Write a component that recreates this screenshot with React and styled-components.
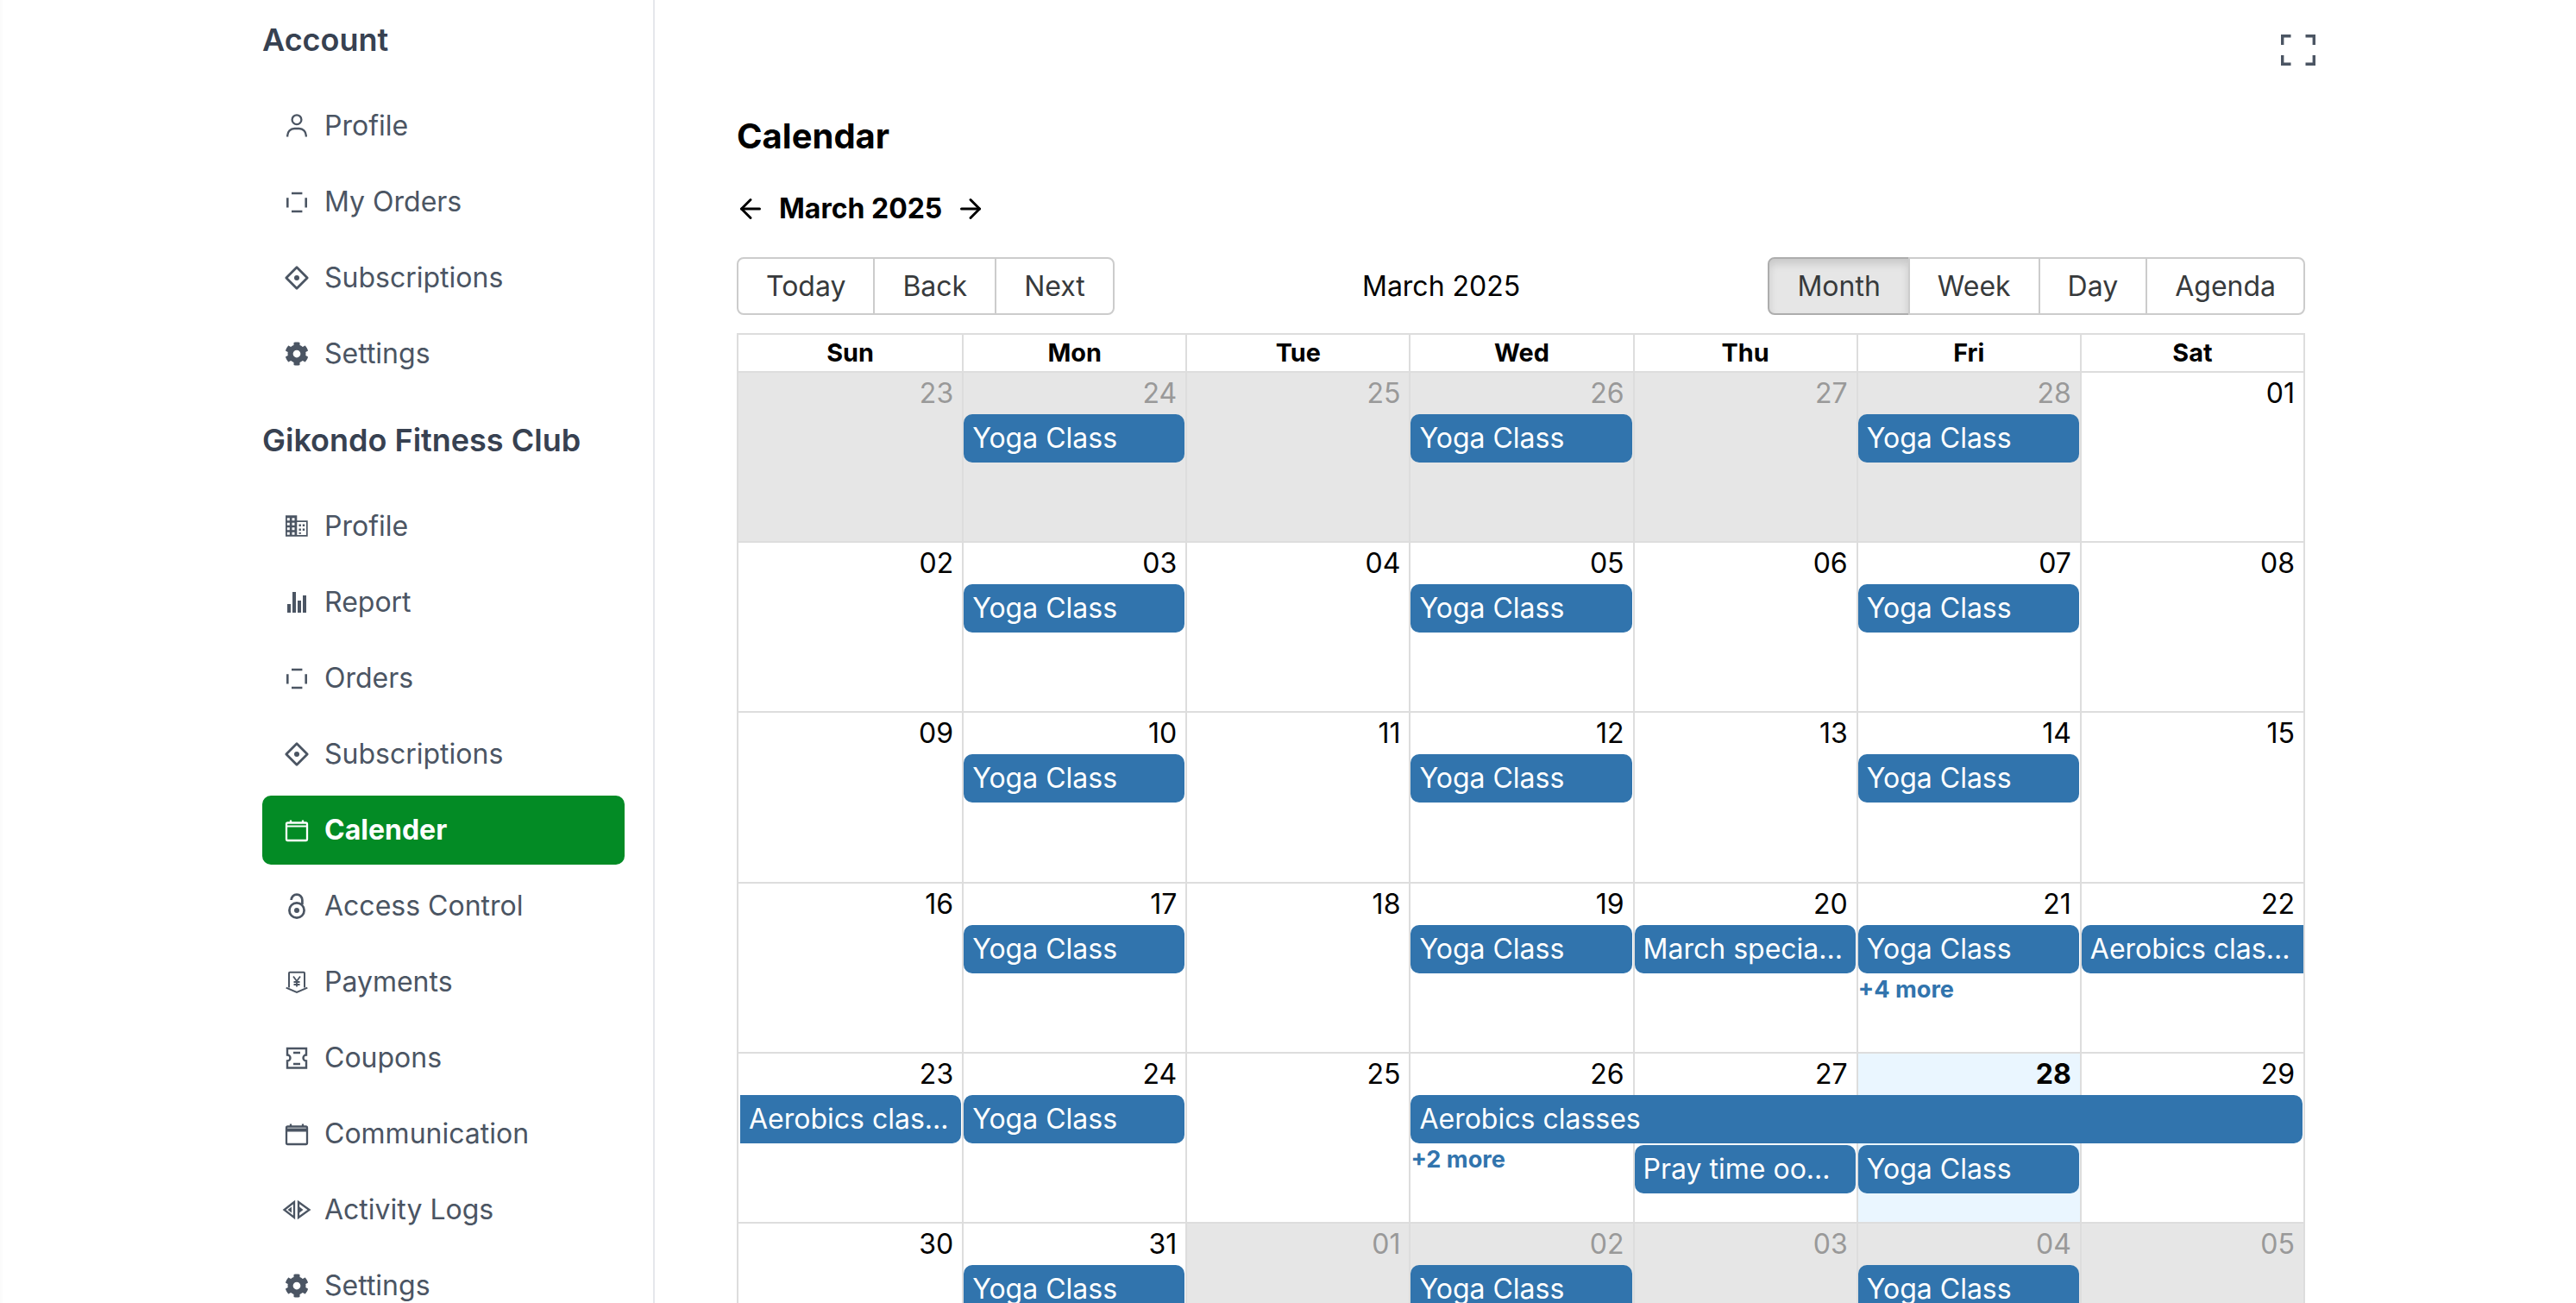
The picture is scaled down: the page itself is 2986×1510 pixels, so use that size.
import styled, { createGlobalStyle } from 'styled-components';
import { ArrowLeft, ArrowRight } from 'lucide-react';
import { FaCog } from 'react-icons/fa';

const GlobalStyle = createGlobalStyle`
  html, body {
    margin: 0;
    height: 100%;
    overflow: hidden;
    background: #fff;
  }
  body {
    font-family: Inter, "Liberation Sans", sans-serif;
    font-size: 32px;
    line-height: 1.5;
    color: #000;
  }
  * { box-sizing: border-box; }
`;

const Page = styled.div`
  display: flex;
  height: 1510px;
  overflow: hidden;
`;

const Sidebar = styled.aside`
  flex: 0 0 759px;
  padding: 18px 33px 0 304px;
  border-right: 2px solid #e5e7eb;
  box-shadow: inset 6px 0 6px -6px rgba(0, 0, 0, 0.04);
`;

const Group = styled.section`
  margin-bottom: 32px;
`;

const GroupTitle = styled.h2`
  margin: 0 0 32px;
  font-size: 36px;
  line-height: 56px;
  font-weight: 600;
  color: #374151;
`;

const NavList = styled.ul`
  list-style: none;
  margin: 0;
  padding: 0;
  display: flex;
  flex-direction: column;
  gap: 8px;
`;

const NavItem = styled.li`
  display: flex;
  align-items: center;
  gap: 18px;
  height: 80px;
  padding-left: 26px;
  border-radius: 10px;
  color: ${(p) => (p.$active ? '#fff' : '#4b5563')};
  background: ${(p) => (p.$active ? '#038b25' : 'transparent')};
  font-weight: ${(p) => (p.$active ? 700 : 400)};

  svg {
    flex: 0 0 28px;
    overflow: visible;
  }
`;

const Main = styled.main`
  flex: 1;
  min-width: 0;
  padding: 40px 314px 0 95px;
`;

const TopBar = styled.div`
  display: flex;
  justify-content: flex-end;
  height: 36px;
  margin-right: -12px;
  color: #4b5563;
`;

const Title = styled.h1`
  margin: 52px 0 0;
  font-size: 40px;
  line-height: 60px;
  font-weight: 700;
`;

const MonthNav = styled.div`
  display: flex;
  align-items: center;
  gap: 15px;
  height: 54px;
  margin: 27px 0 29px -2px;
  font-size: 32px;
  font-weight: 700;
`;

const Toolbar = styled.div`
  display: flex;
  align-items: center;
  margin-bottom: 21px;
`;

const ToolbarLabel = styled.span`
  flex: 1;
  text-align: center;
  padding: 0 20px;
`;

const ButtonGroup = styled.div`
  display: inline-flex;
`;

const ToolButton = styled.button`
  font: inherit;
  line-height: normal;
  color: #373a3c;
  background: ${(p) => (p.$active ? '#e6e6e6' : 'transparent')};
  border: 2px solid ${(p) => (p.$active ? '#adadad' : '#ccc')};
  box-shadow: ${(p) => (p.$active ? 'inset 0 6px 10px rgba(0, 0, 0, 0.125)' : 'none')};
  padding: 12px 32px;
  border-radius: 0;

  &:first-child {
    border-radius: 8px 0 0 8px;
  }
  &:last-child {
    border-radius: 0 8px 8px 0;
  }
  &:not(:first-child) {
    margin-left: -2px;
  }
`;

const Calendar = styled.div`
  border: 2px solid #ddd;
  border-bottom: 0;
`;

const HeaderRow = styled.div`
  display: grid;
  grid-template-columns: repeat(7, 1fr);
`;

const HeaderCell = styled.div`
  text-align: center;
  font-size: 28.8px;
  font-weight: 700;
  line-height: 42px;
  & + & {
    border-left: 2px solid #ddd;
  }
`;

const Week = styled.div`
  display: grid;
  grid-template-columns: repeat(7, 1fr);
  grid-template-rows: 48px 58px 58px 1fr;
  height: 197.2px;
  border-top: 2px solid #ddd;
`;

const DayBg = styled.div`
  grid-column: ${(p) => p.$col};
  grid-row: 1 / -1;
  background: ${(p) => (p.$off ? '#e6e6e6' : p.$today ? '#eaf6ff' : 'transparent')};
  border-left: ${(p) => (p.$col > 1 ? '2px solid #ddd' : '0')};
`;

const DateCell = styled.div`
  grid-column: ${(p) => p.$col};
  grid-row: 1;
  z-index: 1;
  text-align: right;
  padding-right: 10px;
  color: ${(p) => (p.$off ? '#999' : '#000')};
  font-weight: ${(p) => (p.$today ? 700 : 400)};
`;

const Event = styled.div`
  grid-column: ${(p) => p.$col} / span ${(p) => p.$span || 1};
  grid-row: ${(p) => p.$row || 2};
  z-index: 1;
  height: 56px;
  margin: 0 ${(p) => (p.$openEnd ? 0 : 1)}px 0 2px;
  padding: 4px 10px;
  color: #fff;
  background: #3174ad;
  white-space: nowrap;
  overflow: hidden;
  border-radius: ${(p) => (p.$openStart ? '0 10px 10px 0' : p.$openEnd ? '10px 0 0 10px' : '10px')};
`;

const ShowMore = styled.div`
  grid-column: ${(p) => p.$col};
  grid-row: ${(p) => p.$row || 3};
  z-index: 1;
  margin-left: 2px;
  color: #3174ad;
  font-size: 27.2px;
  font-weight: 700;
  line-height: 33px;
`;

const Outline = styled.svg.attrs((p) => ({
  fill: 'none',
  stroke: 'currentColor',
  strokeWidth: p.strokeWidth || 2.3,
  viewBox: '0 0 28 28',
  width: 28,
  height: 28,
}))``;

const UserIcon = () => (
  <Outline>
    <circle cx="14" cy="6.7" r="5.4" />
    <path d="M3.2 26.5V25a8 8 0 0 1 8-8h5.6a8 8 0 0 1 8 8v1.5" />
  </Outline>
);

const OrdersIcon = () => (
  <Outline strokeWidth="2.6">
    <path d="M8 4h12.4M8 25h12.4M3.3 9.2v11.4M24.7 9.2v11.4" />
  </Outline>
);

const DiamondIcon = () => (
  <Outline strokeWidth="2.8">
    <path d="M14 1.8 26.2 14 14 26.2 1.8 14z" strokeLinejoin="round" />
    <circle cx="14" cy="14" r="3" fill="currentColor" stroke="none" />
  </Outline>
);

const BuildingIcon = () => (
  <svg viewBox="0 0 28 28" width="28" height="28" fill="currentColor">
    <path
      fillRule="evenodd"
      d="M1 1.3h13.3v6h12.4v18.4H1zM2.8 4.2v3h3v-3zm5.7 0v3h3v-3zM2.8 9.8v3h3v-3zm5.7 0v3h3v-3zM2.8 15.2v3h3v-3zm5.7 0v3h3v-3zM2.8 20.8v3h3v-3zm5.7 0v3h3v-3zM14.3 9v15h10.7V9z"
    />
    <path d="M16.5 11.5h2.4v2.4h-2.4zM20.8 11.5h2.4v2.4h-2.4zM16.5 16.5h2.4v2.4h-2.4zM20.8 16.5h2.4v2.4h-2.4zM16.5 21h2.4v1.8h-2.4z" />
  </svg>
);

const BarsIcon = () => (
  <svg viewBox="0 0 28 28" width="28" height="28" fill="currentColor">
    <rect x="3" y="16" width="4" height="10" />
    <rect x="9" y="2" width="4" height="24" />
    <rect x="15" y="12" width="4" height="14" />
    <rect x="21" y="6" width="4" height="20" />
  </svg>
);

const CalendarIcon = ({ thick }) => (
  <Outline>
    <rect x="2" y="5.5" width="24" height="20.5" rx="1.5" />
    <path d="M7 2.5v3M21 2.5v3" />
    <path d="M2 9.5h24" strokeWidth={thick ? 4 : 2} />
  </Outline>
);

const LockIcon = () => (
  <Outline strokeWidth="2.7">
    <circle cx="14" cy="19" r="8.6" />
    <circle cx="14" cy="19" r="3" fill="currentColor" stroke="none" />
    <path d="M7.6 7a6.4 6.4 0 0 1 12.8 0v5" />
  </Outline>
);

const PaymentIcon = () => (
  <Outline strokeWidth="2">
    <path d="M5 20.5V3.7a1 1 0 0 1 1-1h16a1 1 0 0 1 1 1v16.8" />
    <path d="M1.7 20.7 14 26l12.3-5.3" />
    <path d="m10 7.5 4 5.5 4-5.5M14 13v6.5M10.5 14h7M10.5 17h7" strokeWidth="1.8" />
  </Outline>
);

const CouponIcon = () => (
  <Outline strokeWidth="2.4">
    <path d="M3 3h22v7.5a3.5 3.5 0 0 0 0 7V25.5H3v-8a3.5 3.5 0 0 0 0-7z" />
    <path d="M10 8h8M10 21h8" />
  </Outline>
);

const LogsIcon = () => (
  <Outline strokeWidth="2.3">
    <path d="M11 5-.5 14 11 23z" />
    <path d="M16 5 28.5 14 16 23z" />
    <path d="M3.5 14 8 10.5v7z" fill="currentColor" stroke="none" />
    <path d="M21.5 14 17 10.5v7z" fill="currentColor" stroke="none" />
  </Outline>
);

const FullscreenIcon = () => (
  <svg viewBox="0 0 40 36" width="40" height="36" fill="none" stroke="currentColor" strokeWidth="3.4">
    <path d="M1.7 12V1.7H11.5M28.5 1.7h9.8V12M1.7 24v10.3h9.8M28.5 34.3h9.8V24" />
  </svg>
);

const Gear = () => <FaCog size={28} />;

const accountNav = [
  { label: 'Profile', icon: <UserIcon /> },
  { label: 'My Orders', icon: <OrdersIcon /> },
  { label: 'Subscriptions', icon: <DiamondIcon /> },
  { label: 'Settings', icon: <Gear /> },
];

const clubNav = [
  { label: 'Profile', icon: <BuildingIcon /> },
  { label: 'Report', icon: <BarsIcon /> },
  { label: 'Orders', icon: <OrdersIcon /> },
  { label: 'Subscriptions', icon: <DiamondIcon /> },
  { label: 'Calender', icon: <CalendarIcon />, active: true },
  { label: 'Access Control', icon: <LockIcon /> },
  { label: 'Payments', icon: <PaymentIcon /> },
  { label: 'Coupons', icon: <CouponIcon /> },
  { label: 'Communication', icon: <CalendarIcon thick /> },
  { label: 'Activity Logs', icon: <LogsIcon /> },
  { label: 'Settings', icon: <Gear /> },
];

const yoga = (col) => ({ col, title: 'Yoga Class' });

const weeks = [
  {
    days: ['23', '24', '25', '26', '27', '28', '01'],
    off: [1, 2, 3, 4, 5, 6],
    events: [yoga(2), yoga(4), yoga(6)],
  },
  { days: ['02', '03', '04', '05', '06', '07', '08'], events: [yoga(2), yoga(4), yoga(6)] },
  { days: ['09', '10', '11', '12', '13', '14', '15'], events: [yoga(2), yoga(4), yoga(6)] },
  {
    days: ['16', '17', '18', '19', '20', '21', '22'],
    events: [
      yoga(2),
      yoga(4),
      { col: 5, title: 'March specia...' },
      yoga(6),
      { col: 7, title: 'Aerobics clas...', openEnd: true },
    ],
    more: [{ col: 6, text: '+4 more' }],
  },
  {
    days: ['23', '24', '25', '26', '27', '28', '29'],
    today: 6,
    events: [
      { col: 1, title: 'Aerobics clas...', openStart: true },
      yoga(2),
      { col: 4, span: 4, title: 'Aerobics classes' },
      { col: 5, row: 3, title: 'Pray time oo...' },
      { col: 6, row: 3, title: 'Yoga Class' },
    ],
    more: [{ col: 4, text: '+2 more' }],
  },
  {
    days: ['30', '31', '01', '02', '03', '04', '05'],
    off: [3, 4, 5, 6, 7],
    events: [yoga(2), yoga(4), yoga(6)],
  },
];

const weekdays = ['Sun', 'Mon', 'Tue', 'Wed', 'Thu', 'Fri', 'Sat'];

function Nav({ items }) {
  return (
    <NavList>
      {items.map((item) => (
        <NavItem key={item.label} $active={item.active}>
          {item.icon}
          {item.label}
        </NavItem>
      ))}
    </NavList>
  );
}

function WeekRow({ week }) {
  const off = week.off || [];
  return (
    <Week>
      {week.days.map((day, i) => (
        <DayBg key={i} $col={i + 1} $off={off.includes(i + 1)} $today={week.today === i + 1} />
      ))}
      {week.days.map((day, i) => (
        <DateCell key={i} $col={i + 1} $off={off.includes(i + 1)} $today={week.today === i + 1}>
          {day}
        </DateCell>
      ))}
      {week.events.map((ev, i) => (
        <Event key={i} $col={ev.col} $span={ev.span} $row={ev.row} $openStart={ev.openStart} $openEnd={ev.openEnd}>
          {ev.title}
        </Event>
      ))}
      {(week.more || []).map((m) => (
        <ShowMore key={m.col} $col={m.col}>
          {m.text}
        </ShowMore>
      ))}
    </Week>
  );
}

export default function App() {
  return (
    <>
      <GlobalStyle />
      <Page>
        <Sidebar>
          <Group>
            <GroupTitle>Account</GroupTitle>
            <Nav items={accountNav} />
          </Group>
          <Group>
            <GroupTitle>Gikondo Fitness Club</GroupTitle>
            <Nav items={clubNav} />
          </Group>
        </Sidebar>
        <Main>
          <TopBar>
            <FullscreenIcon />
          </TopBar>
          <Title>Calendar</Title>
          <MonthNav>
            <ArrowLeft size={36} strokeWidth={2} />
            <span>March 2025</span>
            <ArrowRight size={36} strokeWidth={2} />
          </MonthNav>
          <Toolbar>
            <ButtonGroup>
              <ToolButton>Today</ToolButton>
              <ToolButton>Back</ToolButton>
              <ToolButton>Next</ToolButton>
            </ButtonGroup>
            <ToolbarLabel>March 2025</ToolbarLabel>
            <ButtonGroup>
              <ToolButton $active>Month</ToolButton>
              <ToolButton>Week</ToolButton>
              <ToolButton>Day</ToolButton>
              <ToolButton>Agenda</ToolButton>
            </ButtonGroup>
          </Toolbar>
          <Calendar>
            <HeaderRow>
              {weekdays.map((d) => (
                <HeaderCell key={d}>{d}</HeaderCell>
              ))}
            </HeaderRow>
            {weeks.map((week, i) => (
              <WeekRow key={i} week={week} />
            ))}
          </Calendar>
        </Main>
      </Page>
    </>
  );
}
